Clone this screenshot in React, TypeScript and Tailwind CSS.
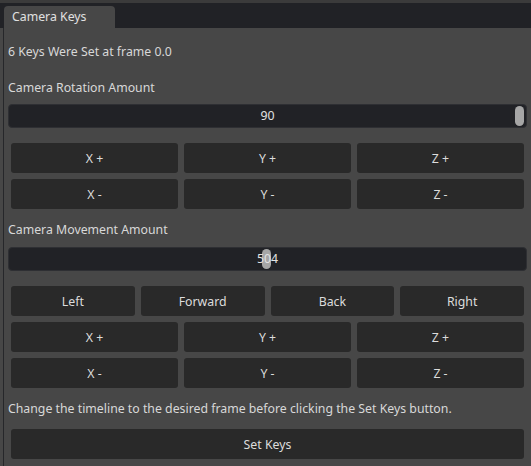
import React from "react";

function KeyButton({ label }: { label: string }) {
  return (
    <button className="h-[30px] rounded-[3px] bg-[#292929] text-[12.3px] text-[#dcdcdc] flex items-center justify-center pt-[2px]">
      {label}
    </button>
  );
}

function AmountSlider({ value, percent }: { value: string; percent: number }) {
  return (
    <div className="relative h-[24px] rounded-[4px] bg-[#212226] border border-[#2e2f33] flex items-center justify-center">
      <div
        className="absolute top-[1px] h-[20px] w-[9px] rounded-full bg-[#a6a6a6]"
        style={{ left: `calc(${percent}% - ${percent / 100 * 11}px)` }}
      />
      <span className="relative text-[12.3px] text-[#e2e2e2] leading-none">{value}</span>
    </div>
  );
}

export default function App() {
  const rotate = ["X +", "Y +", "Z +", "X -", "Y -", "Z -"];
  const move = ["Left", "Forward", "Back", "Right"];

  return (
    <div className="w-[531px] h-[466px] flex flex-col bg-[#3b3b3b] overflow-hidden" style={{ fontFamily: '"Noto Sans", "Open Sans", sans-serif' }}>
      {/* Tab bar */}
      <div className="mt-[3px] h-[25px] bg-[#212226] flex items-end pl-[4px]">
        <div className="h-[22px] w-[111px] rounded-t-[4px] bg-[#474747] pl-[8px] flex items-center text-[12.3px] text-[#e0e0e0]">
          Camera Keys
        </div>
      </div>

      {/* Panel */}
      <div className="flex-1 flex">
        <div className="w-[3px] bg-[#474747]" />
        <div className="w-px bg-[#26272a]" />
        <div className="flex-1 bg-[#474747] pl-[4px] pr-[4px] pt-[16px] flex flex-col text-[12.3px] text-[#d8d8d8]">
          <div className="h-[16px] leading-[16px]">6 Keys Were Set at frame 0.0</div>

          <div className="mt-[20px] h-[16px] leading-[16px]">Camera Rotation Amount</div>
          <div className="mt-[8px]">
            <AmountSlider value="90" percent={100} />
          </div>

          <div className="mt-[15px] px-[3px] grid grid-cols-3 gap-[6px]">
            {rotate.map((l) => (
              <KeyButton key={l} label={l} />
            ))}
          </div>

          <div className="mt-[13px] h-[16px] leading-[16px]">Camera Movement Amount</div>
          <div className="mt-[9px]">
            <AmountSlider value="504" percent={50} />
          </div>

          <div className="mt-[15px] px-[3px] grid grid-cols-4 gap-[6px]">
            {move.map((l) => (
              <KeyButton key={l} label={l} />
            ))}
          </div>
          <div className="mt-[6px] px-[3px] grid grid-cols-3 gap-[6px]">
            {rotate.map((l) => (
              <KeyButton key={l} label={l} />
            ))}
          </div>

          <div className="mt-[13px] h-[16px] leading-[16px]">
            Change the timeline to the desired frame before clicking the Set Keys button.
          </div>
          <div className="mt-[12px] px-[3px] grid">
            <KeyButton label="Set Keys" />
          </div>
        </div>
      </div>
    </div>
  );
}
